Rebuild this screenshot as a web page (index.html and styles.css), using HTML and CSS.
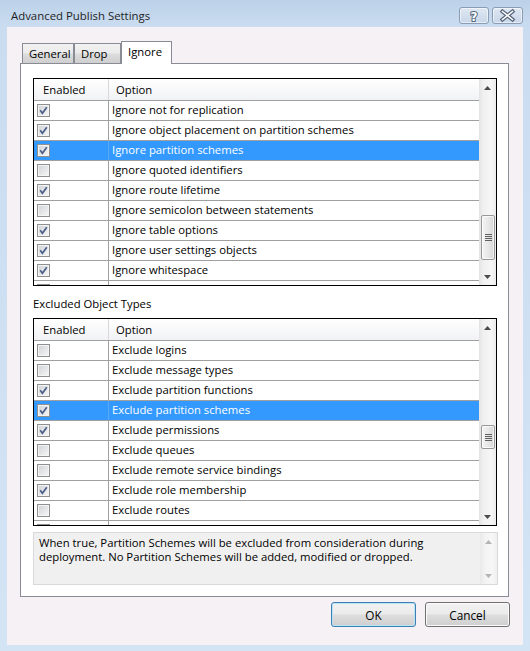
FILE: index.html
```html
<!DOCTYPE html>
<html>
<head>
<meta charset="utf-8">
<link rel="stylesheet" href="styles.css">
</head>
<body>
<div class="window">
  <div class="titlebar">
    <span class="title">Advanced Publish Settings</span>
    <div class="capbtns">
      <div class="capbtn"><svg width="28" height="15" viewBox="0 0 28 15"><text x="14" y="12.5" text-anchor="middle" class="qmark">?</text></svg></div>
      <div class="capbtn"><svg width="29" height="15" viewBox="0 0 29 15"><path d="M9.5 3.5 L19.5 11.5 M19.5 3.5 L9.5 11.5" stroke="#56667c" stroke-width="4" stroke-linecap="square" fill="none"/><path d="M9.5 3.5 L19.5 11.5 M19.5 3.5 L9.5 11.5" stroke="#ffffff" stroke-width="1.6" stroke-linecap="square" fill="none"/></svg></div>
    </div>
  </div>
  <div class="client">
    <div class="tabs">
      <div class="tab w52">General</div>
      <div class="tab w47">Drop</div>
      <div class="tab w51 active">Ignore</div>
    </div>
    <div class="panel">
      <div class="grid">
        <div class="gbody">
          <div class="gh"><div class="c1">Enabled</div><div class="c2">Option</div></div>
          <div class="row"><div class="c1"><span class="cb on"></span></div><div class="c2">Ignore not for replication</div></div>
          <div class="row"><div class="c1"><span class="cb on"></span></div><div class="c2">Ignore object placement on partition schemes</div></div>
          <div class="row sel"><div class="c1"><span class="cb on"></span></div><div class="c2">Ignore partition schemes</div></div>
          <div class="row"><div class="c1"><span class="cb"></span></div><div class="c2">Ignore quoted identifiers</div></div>
          <div class="row"><div class="c1"><span class="cb on"></span></div><div class="c2">Ignore route lifetime</div></div>
          <div class="row"><div class="c1"><span class="cb"></span></div><div class="c2">Ignore semicolon between statements</div></div>
          <div class="row"><div class="c1"><span class="cb on"></span></div><div class="c2">Ignore table options</div></div>
          <div class="row"><div class="c1"><span class="cb on"></span></div><div class="c2">Ignore user settings objects</div></div>
          <div class="row"><div class="c1"><span class="cb on"></span></div><div class="c2">Ignore whitespace</div></div>
          <div class="row"><div class="c1"><span class="cb"></span></div><div class="c2"></div></div>
        </div>
        <div class="vs">
          <div class="arr"><svg width="7" height="4" viewBox="0 0 7 4"><path d="M0 4 L3.5 0 L7 4Z" fill="#4a4a4a"/></svg></div>
          <div class="track">
            <div class="gap1"></div>
            <div class="thumb t45"><svg width="7" height="7" viewBox="0 0 7 7"><path d="M0 0.5H7M0 2.5H7M0 4.5H7M0 6.5H7" stroke="#5f5f5f" stroke-width="1"/></svg></div>
          </div>
          <div class="arr"><svg width="7" height="4" viewBox="0 0 7 4"><path d="M0 0 L3.5 4 L7 0Z" fill="#4a4a4a"/></svg></div>
        </div>
      </div>

      <div class="label">Excluded Object Types</div>

      <div class="grid">
        <div class="gbody">
          <div class="gh"><div class="c1">Enabled</div><div class="c2">Option</div></div>
          <div class="row"><div class="c1"><span class="cb"></span></div><div class="c2">Exclude logins</div></div>
          <div class="row"><div class="c1"><span class="cb"></span></div><div class="c2">Exclude message types</div></div>
          <div class="row"><div class="c1"><span class="cb on"></span></div><div class="c2">Exclude partition functions</div></div>
          <div class="row sel"><div class="c1"><span class="cb on"></span></div><div class="c2">Exclude partition schemes</div></div>
          <div class="row"><div class="c1"><span class="cb on"></span></div><div class="c2">Exclude permissions</div></div>
          <div class="row"><div class="c1"><span class="cb"></span></div><div class="c2">Exclude queues</div></div>
          <div class="row"><div class="c1"><span class="cb"></span></div><div class="c2">Exclude remote service bindings</div></div>
          <div class="row"><div class="c1"><span class="cb on"></span></div><div class="c2">Exclude role membership</div></div>
          <div class="row"><div class="c1"><span class="cb"></span></div><div class="c2">Exclude routes</div></div>
          <div class="row"><div class="c1"><span class="cb"></span></div><div class="c2"></div></div>
        </div>
        <div class="vs">
          <div class="arr"><svg width="7" height="4" viewBox="0 0 7 4"><path d="M0 4 L3.5 0 L7 4Z" fill="#4a4a4a"/></svg></div>
          <div class="track">
            <div class="gap2"></div>
            <div class="thumb t24"><svg width="7" height="7" viewBox="0 0 7 7"><path d="M0 0.5H7M0 2.5H7M0 4.5H7M0 6.5H7" stroke="#5f5f5f" stroke-width="1"/></svg></div>
          </div>
          <div class="arr"><svg width="7" height="4" viewBox="0 0 7 4"><path d="M0 0 L3.5 4 L7 0Z" fill="#4a4a4a"/></svg></div>
        </div>
      </div>

      <div class="desc">
        <div class="dtext">When true, Partition Schemes will be excluded from consideration during deployment. No Partition Schemes will be added, modified or dropped.</div>
        <div class="vs dis">
          <div class="arr"><svg width="7" height="4" viewBox="0 0 7 4"><path d="M0 4 L3.5 0 L7 4Z" fill="#b4b4b4"/></svg></div>
          <div class="track"></div>
          <div class="arr"><svg width="7" height="4" viewBox="0 0 7 4"><path d="M0 0 L3.5 4 L7 0Z" fill="#b4b4b4"/></svg></div>
        </div>
      </div>
    </div>
    <div class="buttons">
      <div class="btn def">OK</div>
      <div class="btn">Cancel</div>
    </div>
  </div>
</div>
</body>
</html>
```
FILE: styles.css
```css
* { box-sizing: border-box; }
html, body { margin: 0; padding: 0; }
body {
  width: 530px; height: 651px; overflow: hidden;
  font-family: "Open Sans", "Noto Sans", sans-serif;
  font-size: 11.3px; color: #000;
  background: #cfe0f2;
}
.window {
  width: 530px; height: 651px;
  display: flex; flex-direction: column;
  background: linear-gradient(to bottom, #bcd1e8 0, #cadcf0 27px, #d3e4f5 100%);
}
.titlebar {
  height: 27px; flex: none;
  display: flex; justify-content: space-between; align-items: flex-start;
  padding: 0 7px 0 11px;
}
.title { font-size: 11.4px; line-height: 15px; padding-top: 8px; color: #1e1e1e; }
.capbtns { display: flex; gap: 3px; padding-top: 7px; }
.capbtn {
  width: 30px; height: 17px;
  border: 1px solid #8a9db5; border-radius: 3px;
  background: linear-gradient(#dfe8f3, #c7d6e8);
  box-shadow: inset 0 0 0 1px rgba(255,255,255,0.55);
  display: flex; align-items: center; justify-content: center;
}
.capbtn + .capbtn { width: 31px; }
.qmark {
  font-family: "DejaVu Sans", sans-serif; font-weight: bold; font-size: 12px;
  fill: #ffffff; stroke: #56667c; stroke-width: 2px; paint-order: stroke;
}
.client {
  margin: 0 7px; height: 618px; flex: none;
  background: #f5f1f5;
}
.tabs {
  display: flex; align-items: flex-end;
  height: 22px; margin: 14px 0 0 15px;
}
.tab {
  height: 20px;
  border: 1px solid #898c95; border-bottom: none;
  padding-left: 6px; line-height: 19px;
  background: linear-gradient(#f2f2f2, #ebebeb 45%, #dcdcdc 55%, #cfcfcf);
}
.w52 { width: 52px; }
.w51 { width: 51px; }
.w47 { width: 47px; }
.tab.active {
  height: 23px; margin-bottom: -1px; line-height: 20px;
  background: #ffffff; position: relative; z-index: 1;
}
.panel {
  margin-left: 13px; width: 489px; height: 534px;
  border: 1px solid #898c95; background: #ffffff;
  padding: 14px 0 0 12px;
}
.grid {
  width: 464px; height: 208px;
  border: 1px solid #000; display: flex; background: #fff;
}
.gbody { flex: 1; overflow: hidden; }
.gh {
  display: flex; height: 22px;
  border-bottom: 1px solid #a0a0a0;
  background: linear-gradient(#ffffff, #f1f2f4);
  line-height: 21px;
}
.gh .c1 { width: 75px; border-right: 1px solid #d8d8d8; padding-left: 9px; }
.gh .c2 { padding-left: 7px; }
.row { display: flex; height: 20px; border-bottom: 1px solid #a0a0a0; }
.row .c1 {
  width: 75px; border-right: 1px solid #a0a0a0;
  padding-left: 3px; display: flex; align-items: center;
}
.row .c2 { flex: 1; padding-left: 3px; line-height: 18px; white-space: nowrap; }
.row.sel { background: #3399ff; color: #ffffff; }
.row.sel .c1 { border-right-color: #5aa9f5; }
.cb {
  width: 13px; height: 13px; flex: none;
  border: 1px solid #8e8f8f;
  background: linear-gradient(135deg, #cfd2d6, #f7f7f7);
  box-shadow: inset 0 0 0 1px #f4f4f4;
}
.cb.on {
  background:
    url("data:image/svg+xml;utf8,<svg xmlns='http://www.w3.org/2000/svg' width='11' height='11' viewBox='0 0 11 11'><path d='M2.2 5.2 L4.4 8.2 L8.8 2.2' stroke='%234c5f8a' stroke-width='1.7' fill='none'/></svg>") center/11px 11px no-repeat,
    linear-gradient(135deg, #cfd2d6, #f7f7f7);
}
.vs {
  width: 17px; flex: none;
  display: flex; flex-direction: column;
  background: linear-gradient(to right, #e3e3e3, #f0f0f0 25%, #f6f6f6 70%, #ececec);
}
.arr { height: 17px; flex: none; display: flex; align-items: center; justify-content: center; }
.track { flex: 1; display: flex; flex-direction: column; }
.gap1 { height: 119px; flex: none; }
.gap2 { height: 89px; flex: none; }
.thumb {
  margin: 0 1px 0 2px;
  border: 1px solid #989898; border-radius: 2px;
  background: linear-gradient(to right, #f4f4f4, #e8e8e8 50%, #d6d6d6);
  box-shadow: inset 0 0 0 1px rgba(255,255,255,0.7);
  display: flex; align-items: center; justify-content: center;
}
.t45 { height: 45px; }
.t24 { height: 24px; }
.label { margin: 10px 0 7px 0; line-height: 15px; }
.desc {
  margin-top: 6px; width: 465px; height: 53px;
  border: 1px solid #d9d9d9; background: #f0f0f0;
  display: flex;
}
.dtext { flex: 1; padding: 3px 0 0 5px; line-height: 14px; }
.vs.dis { background: linear-gradient(to right, #e9e9e9, #f3f3f3 30%, #f7f7f7 70%, #efefef); }
.buttons {
  display: flex; justify-content: flex-end; gap: 9px;
  margin: 5px 13px 0 0;
}
.btn {
  width: 85px; height: 25px;
  border: 1px solid #707070; border-radius: 3px;
  background: linear-gradient(#f2f2f2, #ebebeb 48%, #dddddd 52%, #cfcfcf);
  box-shadow: inset 0 0 0 1px #fbfbfb;
  display: flex; align-items: center; justify-content: center;
  font-size: 11.8px;
}
.btn.def { border-color: #3c7fb1; box-shadow: inset 0 0 0 1px #b9e4f8; }
```
